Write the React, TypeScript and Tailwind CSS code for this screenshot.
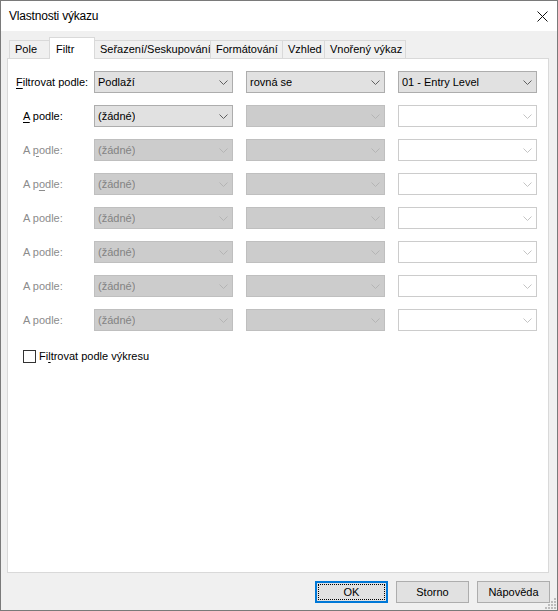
import type { ReactNode } from "react";

type ComboKind = "enabled" | "disabled" | "empty";

const comboBox: Record<ComboKind, string> = {
  enabled: "border-[#adadad] bg-[#e1e1e1] text-black",
  disabled: "border-[#bfbfbf] bg-[#cccccc] text-[#838383]",
  empty: "border-[#cccccc] bg-white text-[#838383]",
};

const chevronColor: Record<ComboKind, string> = {
  enabled: "#606060",
  disabled: "#b4b4b4",
  empty: "#c4c4c4",
};

function Combo({ kind, value }: { kind: ComboKind; value?: string }) {
  return (
    <div
      className={`flex h-[22px] w-[139px] shrink-0 items-center justify-between border pl-[3px] pr-[4px] ${comboBox[kind]}`}
    >
      <span className="truncate leading-none">{value}</span>
      <svg width="9" height="5" viewBox="0 0 9 5" className="shrink-0">
        <polyline
          points="0.5,0.5 4.5,4.5 8.5,0.5"
          fill="none"
          stroke={chevronColor[kind]}
          strokeWidth="1"
        />
      </svg>
    </div>
  );
}

interface FilterRow {
  label: ReactNode;
  indent: boolean;
  active: boolean;
  field: ComboKind;
  fieldValue: string;
  op: ComboKind;
  opValue?: string;
  val: ComboKind;
  valValue?: string;
}

const rows: FilterRow[] = [
  {
    label: (
      <>
        <u className="underline-offset-[2px]">F</u>iltrovat podle:
      </>
    ),
    indent: false,
    active: true,
    field: "enabled",
    fieldValue: "Podlaží",
    op: "enabled",
    opValue: "rovná se",
    val: "enabled",
    valValue: "01 - Entry Level",
  },
  {
    label: (
      <>
        <u className="underline-offset-[2px]">A</u> podle:
      </>
    ),
    indent: true,
    active: true,
    field: "enabled",
    fieldValue: "(žádné)",
    op: "disabled",
    val: "empty",
  },
  {
    label: (
      <>
        A <u className="underline-offset-[2px]">p</u>odle:
      </>
    ),
    indent: true,
    active: false,
    field: "disabled",
    fieldValue: "(žádné)",
    op: "disabled",
    val: "empty",
  },
  {
    label: (
      <>
        A p<u className="underline-offset-[2px]">o</u>dle:
      </>
    ),
    indent: true,
    active: false,
    field: "disabled",
    fieldValue: "(žádné)",
    op: "disabled",
    val: "empty",
  },
  ...[0, 1, 2, 3].map(() => ({
    label: "A podle:",
    indent: true,
    active: false,
    field: "disabled" as ComboKind,
    fieldValue: "(žádné)",
    op: "disabled" as ComboKind,
    val: "empty" as ComboKind,
  })),
];

const tabs = [
  { name: "Pole", width: "w-[41px]" },
  { name: "Filtr", width: "w-[46px]", selected: true },
  { name: "Seřazení/Seskupování", width: "w-[117px]" },
  { name: "Formátování", width: "w-[73px]" },
  { name: "Vzhled", width: "w-[43px]" },
  { name: "Vnořený výkaz", width: "w-[82px]" },
];

export default function App() {
  return (
    <div className="relative flex h-[611px] w-[558px] flex-col border border-[#7a7a7a] bg-[#f0f0f0] font-['Segoe_UI','Liberation_Sans',Arial,sans-serif] text-[11px] text-black">
      {/* title bar */}
      <div className="flex h-[30px] shrink-0 items-center justify-between bg-white pl-[8px] pr-[9px]">
        <span className="text-[12px] tracking-[-0.2px]">Vlastnosti výkazu</span>
        <svg width="11" height="11" viewBox="0 0 11 11">
          <path d="M0.5 0.5 L10.5 10.5 M10.5 0.5 L0.5 10.5" stroke="#111" strokeWidth="1" />
        </svg>
      </div>

      {/* tab strip */}
      <div className="mt-[6px] flex h-[21px] shrink-0 items-end whitespace-nowrap pl-[8px]">
        {tabs.map((t, i) =>
          t.selected ? (
            <div
              key={t.name}
              className={`relative z-10 -mb-px -ml-px flex h-[22px] items-start overflow-hidden border-x border-t border-[#d9d9d9] bg-white pl-[6px] pt-[3px] ${t.width}`}
            >
              {t.name}
            </div>
          ) : (
            <div
              key={t.name}
              className={`flex h-[18px] items-center overflow-hidden border-x border-t border-[#d9d9d9] bg-[#f0f0f0] pl-[5px] ${i > 0 ? "-ml-px" : ""} ${t.width}`}
            >
              {t.name}
            </div>
          )
        )}
      </div>

      {/* tab page */}
      <div className="ml-[6px] mr-[8px] flex h-[515px] shrink-0 flex-col border border-[#d9d9d9] bg-white pt-[12px]">
        <div className="flex flex-col gap-[12px]">
          {rows.map((r, i) => (
            <div key={i} className="flex items-center">
              <div
                className={`w-[86px] shrink-0 whitespace-nowrap ${r.indent ? "pl-[15px]" : "pl-[8px]"} ${r.active ? "text-black" : "text-[#8c8c8c]"}`}
              >
                {r.label}
              </div>
              <Combo kind={r.field} value={r.fieldValue} />
              <div className="w-[13px] shrink-0" />
              <Combo kind={r.op} value={r.opValue} />
              <div className="w-[13px] shrink-0" />
              <Combo kind={r.val} value={r.valValue} />
            </div>
          ))}
        </div>

        <label className="mt-[17px] flex items-center pl-[15px]">
          <span className="h-[13px] w-[13px] shrink-0 border border-[#333] bg-white" />
          <span className="pl-[3px]">
            Fi<u className="underline-offset-[2px]">l</u>trovat podle výkresu
          </span>
        </label>
      </div>

      {/* buttons */}
      <div className="flex shrink-0 justify-end gap-[8px] pb-[7px] pr-[7px] pt-[8px]">
        <button className="flex h-[22px] w-[73px] items-center justify-center border-2 border-[#0078d7] bg-[#e1e1e1] p-[1px]">
          <span className="flex h-full w-full items-center justify-center border border-dotted border-black">
            OK
          </span>
        </button>
        <button className="flex h-[22px] w-[73px] items-center justify-center border border-[#adadad] bg-[#e1e1e1]">
          Storno
        </button>
        <button className="flex h-[22px] w-[73px] items-center justify-center border border-[#adadad] bg-[#e1e1e1]">
          Nápověda
        </button>
      </div>

      {/* size grip */}
      <svg width="12" height="12" viewBox="0 0 12 12" className="absolute bottom-0 right-0">
        {[
          [9, 0],
          [6, 3],
          [9, 3],
          [3, 6],
          [6, 6],
          [9, 6],
          [0, 9],
          [3, 9],
          [6, 9],
          [9, 9],
        ].map(([x, y]) => (
          <rect key={`${x}-${y}`} x={x} y={y} width="2" height="2" fill="#bcbcbc" />
        ))}
      </svg>
    </div>
  );
}
